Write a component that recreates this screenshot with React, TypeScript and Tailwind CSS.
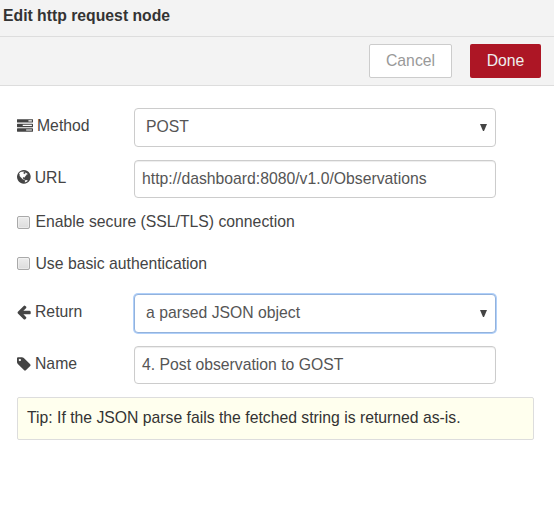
import type { ReactNode } from "react";

const TASKS =
  "M1024 1408h640v-128h-640v128zm-384-512h1024v-128h-1024v128zm640-512h384v-128h-384v128zm512 832v256q0 26-19 45t-45 19h-1664q-26 0-45-19t-19-45v-256q0-26 19-45t45-19h1664q26 0 45 19t19 45zm0-512v256q0 26-19 45t-45 19h-1664q-26 0-45-19t-19-45v-256q0-26 19-45t45-19h1664q26 0 45 19t19 45zm0-512v256q0 26-19 45t-45 19h-1664q-26 0-45-19t-19-45v-256q0-26 19-45t45-19h1664q26 0 45 19t19 45z";
const ARROW =
  "M1536 896v128q0 53-32.5 90.5t-84.5 37.5h-704l293 294q38 36 38 90t-38 90l-75 76q-37 37-90 37-52 0-91-37l-651-652q-37-37-37-90 0-52 37-91l651-650q38-38 91-38 52 0 90 38l75 74q38 38 38 91t-38 91l-293 293h704q52 0 84.5 37.5t32.5 90.5z";
const TAG =
  "M448 448q0-53-37.5-90.5t-90.5-37.5-90.5 37.5-37.5 90.5 37.5 90.5 90.5 37.5 90.5-37.5 37.5-90.5zm1067 576q0 53-37 90l-491 492q-39 37-91 37-53 0-90-37l-715-716q-38-37-64.5-101t-26.5-117v-416q0-52 38-90t90-38h416q53 0 117 26.5t102 64.5l715 714q37 39 37 91z";
const GLOBE =
  "M896 128q209 0 385.5 103t279.5 279.5 103 385.5-103 385.5-279.5 279.5-385.5 103-385.5-103-279.5-279.5-103-385.5 103-385.5 279.5-279.5 385.5-103zm274 521q-2 1-9.5 9.5t-13.5 9.5q2 0 4.5-5t5-11 3.5-7q6-7 22-15 14-6 52-12 34-8 51 11-2-2 9.5-13t14.5-12q3-2 15-4.5t15-7.5l2-22q-12 1-17.5-7t-6.5-21q0 2-6 8 0-7-4.5-8t-11.5 1-9 1q-10-3-15-7.5t-8-16.5-4-15q-2-5-9.5-11t-9.5-10q-1-2-2.5-5.5t-3-6.5-4-5.5-5.5-2.5-7 5-7.5 10-4.5 5q-3-2-6-1.5t-4.5 1-4.5 3-5 3.5q-3 2-8.5 3t-8.5 2q15-5-1-11-10-4-16-3 9-4 7.5-12t-8.5-14h5q-1-4-8.5-8.5t-17.5-8.5-13-6q-8-5-34-9.5t-33-.5q-5 6-4.5 10.5t4 14 3.5 12.5q1 6-5.5 13t-6.5 12q0 7 14 15.5t10 21.5q-3 8-16 16t-16 12q-5 8-1.5 18.5t10.5 16.5q2 2 1.5 4t-3.5 4.5-5.5 4-6.5 3.5l-3 2q-11 5-20.5-6t-13.5-26q-7-25-16-30-23-8-29 1-5-13-41-26-25-9-58-4 6-1 0-15-7-15-19-12 3-6 4-17.5t1-13.5q3-13 12-23 1-1 7-8.5t9.5-13.5.5-6q35 4 50-11 5-5 11.5-17t10.5-17q9-6 14-5.5t14.5 5.5 14.5 5q14 1 15.5-11t-7.5-20q12 1 3-17-4-7-8-9-12-4-27 5-8 4 2 8-1-1-9.5 10.5t-16.5 17.5-16-5q-1-1-5.5-13.5t-9.5-13.5q-8 0-16 15 3-8-11-15t-24-8q19-12-8-27-7-4-20.5-5t-19.5 4q-5 7-5.5 11.5t5 8 10.5 5.5 11.5 4 8.5 3q14 10 8 14-2 1-8.5 3.5t-11.5 4.5-6 4q-3 4 0 14t-2 14q-5-5-9-17.5t-7-16.5q7 9-25 6l-10-1q-4 0-16 2t-20.5 1-13.5-8q-4-8 0-20 1-4 4-2-4-3-11-9.5t-10-8.5q-46 15-94 41 6 1 12-1 5-2 13-6.5t10-5.5q34-14 42-7l5-5q14 16 20 25-7-4-30-1-20 6-22 12 7 12 5 18-4-3-11.5-10t-14.5-11-15-5q-16 0-22 1-146 80-235 222 7 7 12 8 4 1 5 9t2.5 11 11.5-3q9 8 3 19 1-1 44 27 19 17 21 21 3 11-10 18-1-2-9-9t-9-4q-3 5 .5 18.5t10.5 12.5q-7 0-9.5 16t-2.5 35.5-1 23.5l2 1q-3 12 5.5 34.5t21.5 19.5q-13 3 20 43 6 8 8 9 3 2 12 7.5t15 10 10 10.5q4 5 10 22.5t14 23.5q-2 6 9.5 20t10.5 23q-1 0-2.5 1t-2.5 1q3 7 15.5 14t15.5 13q1 3 2 10t3 11 8 2q2-20-24-62-15-25-17-29-3-5-5.5-15.5t-4.5-14.5q2 0 6 1.5t8.5 3.5 7.5 4 2 3q-3 7 2 17.5t12 18.5 17 19 12 13q6 6 14 19.5t0 13.5q9 0 20 10t17 20q5 8 8 26t5 24q2 7 8.5 13.5t12.5 9.5l16 8 13 7q5 2 18.5 10.5t21.5 11.5q10 4 16 4t14.5-2.5 13.5-3.5q15-2 29 15t21 21q36 19 55 11-2 1 .5 7.5t8 15.5 9 14.5 5.5 8.5q5 6 18 15t18 15q6-4 7-9-3 8 7 20t18 10q14-3 14-32-31 15-49-18 0-1-2.5-5.5t-4-8.5-2.5-8.5 0-7.5 5-3q9 0 10-3.5t-2-12.5-4-13q-1-8-11-20t-12-15q-5 9-16 8t-16-9q0 1-1.5 5.5t-1.5 6.5q-13 0-15-1 1-3 2.5-17.5t3.5-22.5q1-4 5.5-12t7.5-14.5 4-12.5-4.5-9.5-17.5-2.5q-19 1-26 20-1 3-3 10.5t-5 11.5-9 7q-7 3-24 2t-24-5q-13-8-22.5-29t-9.5-37q0-10 2.5-26.5t3-25-5.5-24.5q3-2 9-9.5t10-10.5q2-1 4.5-1.5t4.5 0 4-1.5 3-6q-1-1-4-3-3-3-4-3 7 3 28.5-1.5t27.5 1.5q15 11 22-2 0-1-2.5-9.5t-.5-13.5q5 27 29 9 3 3 15.5 5t17.5 5q3 2 7 5.5t5.5 4.5 5-.5 8.5-6.5q10 14 12 24 11 40 19 44 7 3 11 2t4.5-9.5 0-14-1.5-12.5l-1-8v-18l-1-8q-15-3-18.5-12t1.5-18.5 15-18.5q1-1 8-3.5t15.5-6.5 12.5-8q21-19 15-35 7 0 11-9-1 0-5-3t-7.5-5-4.5-2q9-5 2-16 5-3 7.5-11t7.5-10q9 12 21 2 8-8 1-16 5-7 20.5-10.5t18.5-9.5q7 2 8-2t1-12 3-12q4-5 15-9t13-5l17-11q3-4 0-4 18 2 31-11 10-11-6-20 3-6-3-9.5t-15-5.5q3-1 11.5-.5t10.5-1.5q15-10-7-16-17-5-43 12zm-163 877q206-36 351-189-3-3-12.5-4.5t-12.5-3.5q-18-7-24-8 1-7-2.5-13t-8-9-12.5-8-11-7q-2-2-7-6t-7-5.5-7.5-4.5-8.5-2-10 1l-3 1q-3 1-5.5 2.5t-5.5 3-4 3 0 2.5q-21-17-36-22-5-1-11-5.5t-10.5-7-10-1.5-11.5 7q-5 5-6 15t-2 13q-7-5 0-17.5t2-18.5q-3-6-10.5-4.5t-12 4.5-11.5 8.5-9 6.5-8.5 5.5-8.5 7.5q-3 4-6 12t-5 11q-2-4-11.5-6.5t-9.5-5.5q2 10 4 35t5 38q7 31-12 48-27 25-29 40-4 22 12 26 0 7-8 20.5t-7 21.5q0 6 2 16z";

function Glyph({ d }: { d: string }) {
  return (
    <svg viewBox="0 0 1792 1792" className="size-4 shrink-0" fill="currentColor">
      <path d={d} />
    </svg>
  );
}

function Globe() {
  return (
    <svg viewBox="128 128 1536 1536" className="size-[13.7px] shrink-0" fill="currentColor">
      <path d={GLOBE} />
    </svg>
  );
}

function Label({ icon, iconClass, text }: { icon: ReactNode; iconClass: string; text: string }) {
  return (
    <div className="flex h-5 w-[117px] shrink-0 items-center text-[#444]">
      <span className={iconClass}>{icon}</span>
      <span>{text}</span>
    </div>
  );
}

function Select({ value, focused = false }: { value: string; focused?: boolean }) {
  return (
    <div
      className={
        "flex h-[39px] w-[362px] items-center justify-between rounded border bg-white pr-2 pl-[11px] " +
        (focused ? "border-[#93b2dc] shadow-[0_0_0_1px_#b0d0fa]" : "border-[#ccc]")
      }
    >
      <span className="-mt-px">{value}</span>
      <svg viewBox="0 0 7 7" className="size-[7px] text-[#444]" fill="currentColor">
        <path d="M0 0h7L4 7H3z" />
      </svg>
    </div>
  );
}

function Input({ value }: { value: string }) {
  return (
    <div className="flex h-[38px] w-[362px] items-center rounded border border-[#ccc] bg-white pl-[7px] shadow-[inset_0_1px_1px_rgba(0,0,0,0.075)]">
      <span className="-mt-px">{value}</span>
    </div>
  );
}

function Check({ text, boxClass }: { text: string; boxClass: string }) {
  return (
    <div className="flex h-5 items-start text-[#444]">
      <span
        className={
          "mr-[5.5px] h-[13px] w-[13px] rounded-[2px] border border-[#a9a9a9] bg-gradient-to-b from-[#ededed] to-[#dcdcdc] shadow-[inset_0_0_0_1px_rgba(255,255,255,0.35)] " +
          boxClass
        }
      />
      <span>{text}</span>
    </div>
  );
}

export default function App() {
  return (
    <div className="h-[511px] w-[554px] overflow-hidden bg-white font-['Liberation_Sans',Arial,sans-serif] text-[15.75px] leading-5 text-[#555]">
      <header className="h-[37px] border-b border-[#ddd] bg-[#f3f3f3] pt-[6px] pl-[3px] font-bold text-[#333]">
        Edit http request node
      </header>
      <div className="flex h-[49px] items-start justify-end border-b border-[#ddd] bg-[#f3f3f3] pt-[7px] pr-[13px]">
        <div className="mr-[18px] flex h-[34px] w-[83px] items-center justify-center rounded-[2px] border border-[#ccc] bg-white text-[#999]">
          Cancel
        </div>
        <div className="flex h-[34px] w-[71px] items-center justify-center rounded-[2px] bg-[#ad1625] text-[#eee]">
          Done
        </div>
      </div>

      <main className="pt-[22px] pl-[17px]">
        <div className="flex h-[39px]">
          <div className="pt-2">
            <Label icon={<Glyph d={TASKS} />} iconClass="mr-1 mb-px" text="Method" />
          </div>
          <Select value="POST" />
        </div>
        <div className="mt-[13px] flex h-[38px]">
          <div className="pt-2">
            <Label icon={<Globe />} iconClass="mr-1 mb-0.5" text="URL" />
          </div>
          <Input value="http://dashboard:8080/v1.0/Observations" />
        </div>
        <div className="mt-[14px]">
          <Check text="Enable secure (SSL/TLS) connection" boxClass="mt-1" />
        </div>
        <div className="mt-[22px]">
          <Check text="Use basic authentication" boxClass="mt-[3px]" />
        </div>
        <div className="mt-[20px] flex h-[39px]">
          <div className="pt-2">
            <Label icon={<Glyph d={ARROW} />} iconClass="mr-[2px]" text="Return" />
          </div>
          <Select value="a parsed JSON object" focused />
        </div>
        <div className="mt-[13px] flex h-[38px]">
          <div className="pt-2">
            <Label icon={<Glyph d={TAG} />} iconClass="mr-[2px] mb-px" text="Name" />
          </div>
          <Input value="4. Post observation to GOST" />
        </div>
        <div className="mt-[13px] flex h-[43px] w-[517px] items-center rounded-[2px] border border-[#ddd] bg-[#ffffee] pl-[9px] text-[#333]">
          <span className="-mt-px">Tip: If the JSON parse fails the fetched string is returned as-is.</span>
        </div>
      </main>
    </div>
  );
}
